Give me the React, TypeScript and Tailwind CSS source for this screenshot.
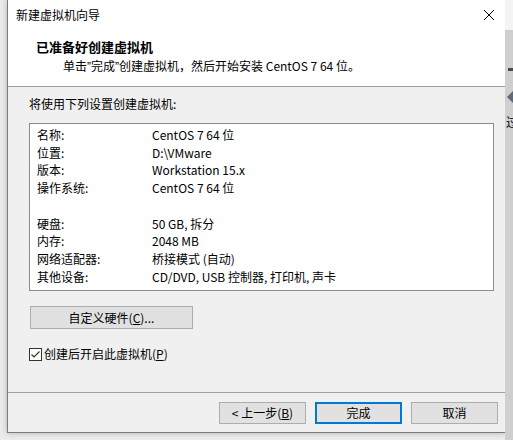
import React from "react";

const rows: [string, string][] = [
  ["名称:", "CentOS 7 64 位"],
  ["位置:", "D:\\VMware"],
  ["版本:", "Workstation 15.x"],
  ["操作系统:", "CentOS 7 64 位"],
  ["", ""],
  ["硬盘:", "50 GB, 拆分"],
  ["内存:", "2048 MB"],
  ["网络适配器:", "桥接模式 (自动)"],
  ["其他设备:", "CD/DVD, USB 控制器, 打印机, 声卡"],
];

function WinButton({
  children,
  primary,
  className = "",
}: {
  children: React.ReactNode;
  primary?: boolean;
  className?: string;
}) {
  return (
    <button
      type="button"
      className={`flex items-center justify-center bg-[#e1e1e1] text-[12px] leading-none text-black ${
        primary ? "border-2 border-[#0078d7]" : "border border-[#adadad]"
      } ${className}`}
    >
      {children}
    </button>
  );
}

// narrow quote mark, like the Windows UI font draws it
const Q = () => <span className="font-['Liberation_Sans',sans-serif]">”</span>;

export default function App() {
  return (
    <div
      className="relative flex h-[440px] w-[513px] overflow-hidden bg-[#ececec] text-black"
      style={{ fontFamily: '"Noto Sans CJK SC", "Noto Sans", sans-serif' }}
    >
      {/* bits of the window behind, peeking out on the right */}
      <div className="absolute right-0 top-0 h-[440px] w-[8px] bg-[#cfcfcf]">
        <div className="h-[30px] bg-[#f4f4f4]" />
        <div className="absolute left-[3px] top-[68px] h-[3px] w-[5px] bg-[#4a4a4a]" />
        <div className="absolute left-[2px] top-[91px] h-0 w-0 border-y-[6px] border-r-[6px] border-y-transparent border-r-[#5b6b78]" />
        <div className="absolute left-[1px] top-[116px] text-[12px] leading-none">过</div>
      </div>

      <div className="ml-[7px] flex h-[433px] w-[499px] flex-col border border-t-0 border-[#7a7a7a] bg-[#f0f0f0] shadow-[0_0_6px_rgba(0,0,0,0.25)]">
        {/* title bar + header */}
        <div className="h-[87px] border-b border-[#a0a0a0] bg-white">
          <div className="flex h-[30px] items-center justify-between pl-[8px] pr-[9px]">
            <span className="text-[12px]">新建虚拟机向导</span>
            <svg width="12" height="12" viewBox="0 0 12 12" className="mr-[1px]">
              <path d="M1 1 L11 11 M11 1 L1 11" stroke="#000" strokeWidth="1" fill="none" />
            </svg>
          </div>
          <div className="mt-[8px] pl-[28px] text-[13px] font-bold leading-[18px]">
            已准备好创建虚拟机
          </div>
          <div className="mt-[1px] pl-[55px] text-[12px] leading-[18px]">
            单击<Q />完成<Q />创建虚拟机，然后开始安装 CentOS 7 64 位。
          </div>
        </div>

        {/* body */}
        <div className="flex flex-1 flex-col pl-[21px] pt-[8px]">
          <div className="text-[12px] leading-[18px]">将使用下列设置创建虚拟机:</div>
          <div className="mt-[10px] h-[168px] w-[465px] border border-[#8a8a8a] bg-white pl-[7px] pt-[2px]">
            {rows.map(([k, v], i) => (
              <div key={i} className="flex h-[17.75px] items-center text-[12px]">
                <span className="w-[115px] shrink-0">{k}</span>
                <span>{v}</span>
              </div>
            ))}
          </div>

          <WinButton className="ml-[1px] mt-[15px] h-[23px] w-[163px]">
            自定义硬件(<span className="underline">C</span>)...
          </WinButton>

          <div className="mt-[16px] flex h-[18px] items-center gap-[2px]">
            <svg width="13" height="13" viewBox="0 0 13 13">
              <rect x="0.5" y="0.5" width="12" height="12" fill="#fff" stroke="#333" />
              <path d="M2.5 6.5 L5 9 L10.5 3.5" stroke="#333" strokeWidth="1.2" fill="none" />
            </svg>
            <span className="text-[12px]">
              创建后开启此虚拟机(<span className="underline">P</span>)
            </span>
          </div>
        </div>

        {/* footer */}
        <div className="flex h-[40px] justify-end gap-[9px] border-t border-[#a0a0a0] pr-[7px] pt-[9px]">
          <WinButton className="h-[22px] w-[87px]">
            &lt; 上一步(<span className="underline">B</span>)
          </WinButton>
          <WinButton primary className="h-[22px] w-[87px]">
            完成
          </WinButton>
          <WinButton className="h-[22px] w-[87px]">取消</WinButton>
        </div>
      </div>
    </div>
  );
}
